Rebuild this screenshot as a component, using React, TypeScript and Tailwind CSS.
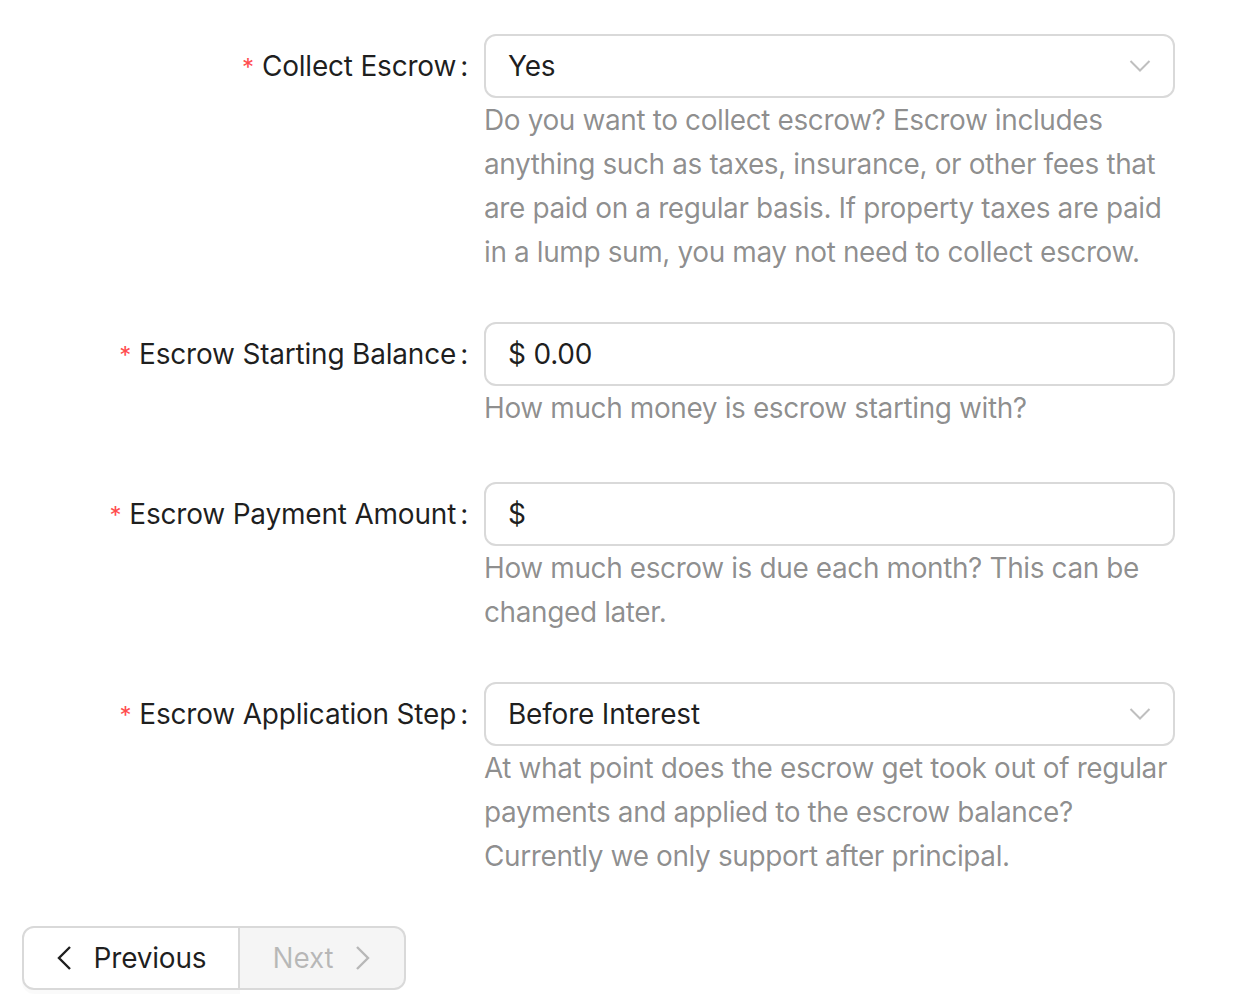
import React from "react";

const Chevron = ({ dir }: { dir: "down" | "left" | "right" }) => {
  if (dir === "down")
    return (
      <svg width="22" height="14" viewBox="0 0 22 14" fill="none">
        <path d="M1.5 2L11 11.5L20.5 2" stroke="rgba(0,0,0,0.25)" strokeWidth="2" />
      </svg>
    );
  const color = dir === "left" ? "rgba(0,0,0,0.88)" : "rgba(0,0,0,0.25)";
  return (
    <svg width="16" height="26" viewBox="0 0 16 26" fill="none">
      {dir === "left" ? (
        <path d="M14 2L3 13L14 24" stroke={color} strokeWidth="2.4" />
      ) : (
        <path d="M2 2L13 13L2 24" stroke={color} strokeWidth="2.4" />
      )}
    </svg>
  );
};

function Label({ text }: { text: string }) {
  return (
    <div className="w-[484px] shrink-0 h-[64px] flex items-center justify-end pr-[16px] text-[28px] text-[rgba(0,0,0,0.88)] whitespace-nowrap">
      <span className="text-[#ff4d4f] text-[24px] mr-[8px] leading-none relative top-[2px]">*</span>
      <span>{text}</span>
      <span className="ml-[4px]">:</span>
    </div>
  );
}

function Row({
  label,
  children,
  help,
  mb,
}: {
  label: string;
  children: React.ReactNode;
  help: string[];
  mb: string;
}) {
  return (
    <div className={`flex ${mb}`}>
      <Label text={label} />
      <div className="w-[691px]">
        {children}
        <div className="text-[28px] leading-[44px] text-[rgba(0,0,0,0.45)] tracking-[-0.4px] whitespace-nowrap">
          {help.map((l, i) => (
            <div key={i}>{l}</div>
          ))}
        </div>
      </div>
    </div>
  );
}

function Select({ value }: { value: string }) {
  return (
    <div className="h-[64px] border-2 border-[#d9d9d9] rounded-[12px] bg-white flex items-center pl-[22px] pr-[22px] justify-between text-[28px] text-[rgba(0,0,0,0.88)]">
      <span>{value}</span>
      <Chevron dir="down" />
    </div>
  );
}

function Input({ value }: { value: string }) {
  return (
    <div className="h-[64px] border-2 border-[#d9d9d9] rounded-[12px] bg-white flex items-center pl-[22px] text-[28px] text-[rgba(0,0,0,0.88)]">
      <span>{value}</span>
    </div>
  );
}

export default function App() {
  return (
    <div
      className="w-[1236px] h-[1008px] bg-white pt-[34px] tracking-[-0.2px]"
      style={{ fontFamily: "Inter, 'Noto Sans', sans-serif" }}
    >
      <Row
        label="Collect Escrow"
        mb="mb-[48px]"
        help={[
          "Do you want to collect escrow? Escrow includes",
          "anything such as taxes, insurance, or other fees that",
          "are paid on a regular basis. If property taxes are paid",
          "in a lump sum, you may not need to collect escrow.",
        ]}
      >
        <Select value="Yes" />
      </Row>
      <Row
        label="Escrow Starting Balance"
        mb="mb-[52px]"
        help={["How much money is escrow starting with?"]}
      >
        <Input value="$ 0.00" />
      </Row>
      <Row
        label="Escrow Payment Amount"
        mb="mb-[48px]"
        help={["How much escrow is due each month? This can be", "changed later."]}
      >
        <Input value="$" />
      </Row>
      <Row
        label="Escrow Application Step"
        mb="mb-[48px]"
        help={[
          "At what point does the escrow get took out of regular",
          "payments and applied to the escrow balance?",
          "Currently we only support after principal.",
        ]}
      >
        <Select value="Before Interest" />
      </Row>
      <div className="pl-[22px] flex">
        <button className="h-[64px] w-[218px] border-2 border-[#d9d9d9] rounded-l-[12px] bg-white flex items-center justify-center gap-[22px] text-[28px] text-[rgba(0,0,0,0.88)] shadow-[0_4px_0_rgba(0,0,0,0.02)]">
          <Chevron dir="left" />
          <span>Previous</span>
        </button>
        <button className="h-[64px] w-[166px] border-2 border-l-0 border-[#d9d9d9] rounded-r-[12px] bg-[#f5f5f5] flex items-center justify-center gap-[22px] text-[28px] text-[rgba(0,0,0,0.25)]">
          <span>Next</span>
          <Chevron dir="right" />
        </button>
      </div>
    </div>
  );
}
